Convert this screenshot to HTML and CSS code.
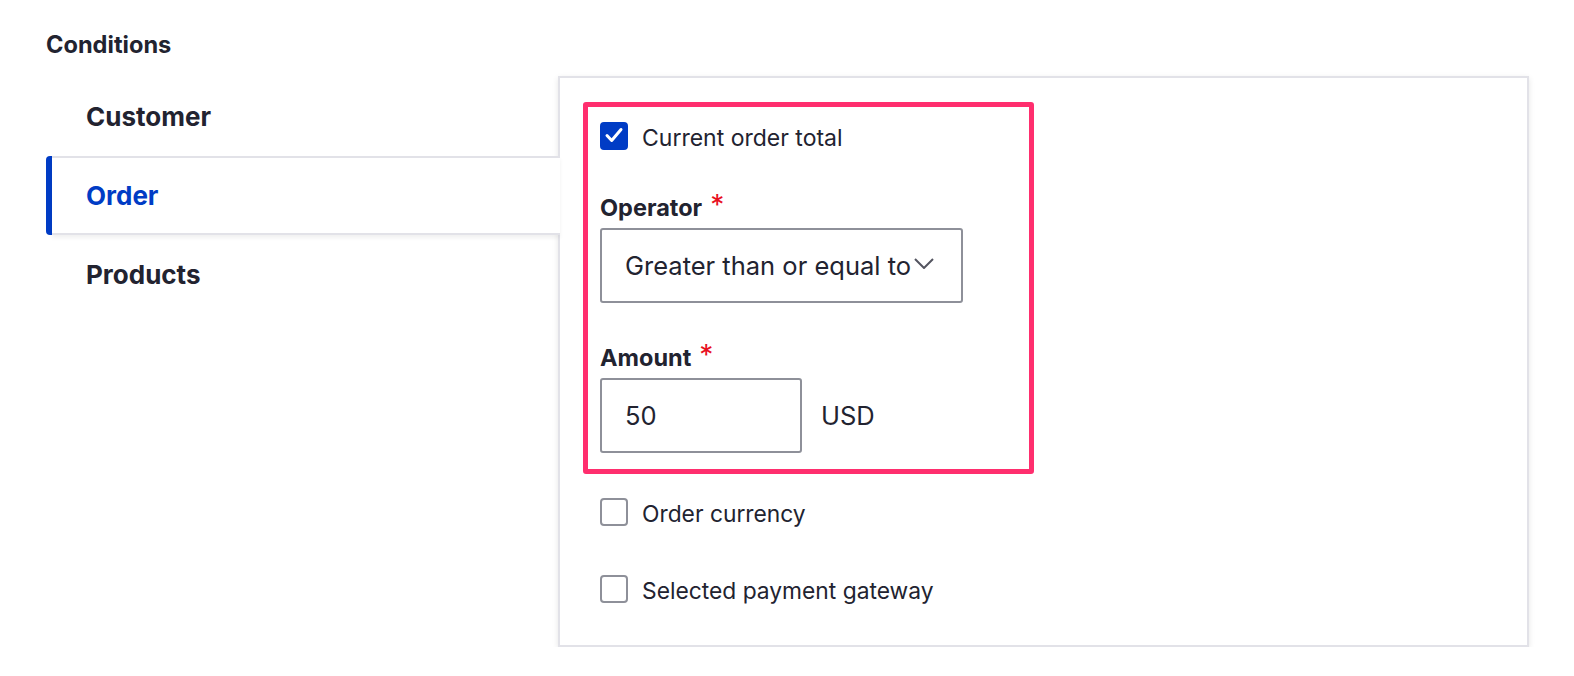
FILE: index.html
```html
<!DOCTYPE html>
<html lang="en">
<head>
<meta charset="utf-8">
<title>Conditions</title>
<link rel="stylesheet" href="styles.css">
</head>
<body>
<div class="page">
  <div class="title">Conditions</div>
  <div class="row">
    <ul class="tabs">
      <li class="tab">Customer</li>
      <li class="tab active"><span class="bar"></span><span class="tab-inner">Order</span></li>
      <li class="tab">Products</li>
    </ul>
    <div class="panel">
      <div class="highlight">
        <div class="check-row">
          <span class="checkbox checked"><svg width="24" height="24" viewBox="0 0 24 24"><polyline points="5,11.5 9.7,16.5 19,5.5" fill="none" stroke="#fff" stroke-width="3" stroke-linecap="round" stroke-linejoin="round"/></svg></span>
          <span class="check-label">Current order total</span>
        </div>
        <div class="field op">
          <div class="label"><span class="label-text">Operator</span><span class="req">*</span></div>
          <div class="select">
            <span class="select-text">Greater than or equal to</span>
            <svg class="chev" width="20" height="11" viewBox="0 0 20 11"><polyline points="1,1 10,10 19,1" fill="none" stroke="#545560" stroke-width="2"/></svg>
          </div>
        </div>
        <div class="field amount">
          <div class="label"><span class="label-text">Amount</span><span class="req">*</span></div>
          <div class="input-row">
            <div class="input">50</div>
            <span class="suffix">USD</span>
          </div>
        </div>
      </div>
      <div class="check-row other first">
        <span class="checkbox"></span>
        <span class="check-label">Order currency</span>
      </div>
      <div class="check-row other second">
        <span class="checkbox"></span>
        <span class="check-label">Selected payment gateway</span>
      </div>
    </div>
  </div>
</div>
</body>
</html>
```
FILE: styles.css
```css
html, body {
  margin: 0;
  background: #ffffff;
}

.page {
  padding: 31px 45px 0 46px;
  font-family: Inter, "Noto Sans", "Liberation Sans", sans-serif;
  color: #222330;
}

.title {
  font-size: 23.6px;
  font-weight: 700;
  line-height: 27px;
  height: 27px;
  margin-bottom: 18px;
}

.row {
  display: flex;
  align-items: flex-start;
}

.tabs {
  list-style: none;
  margin: 1px -2px 0 0;
  padding: 0;
  width: 514px;
  flex: none;
  position: relative;
  z-index: 1;
}

.tab {
  height: 79px;
  box-sizing: border-box;
  display: flex;
  align-items: center;
  padding-left: 40px;
  font-size: 26px;
  font-weight: 700;
}

.tab.active {
  padding-left: 0;
  align-items: stretch;
}

.bar {
  width: 6px;
  flex: none;
  background: #003cc5;
  border-radius: 4px 0 0 4px;
}

.tab-inner {
  flex: 1;
  display: flex;
  align-items: center;
  padding-left: 34px;
  border-top: 2px solid #e2e2e8;
  border-bottom: 2px solid #e2e2e8;
  background: #ffffff;
  color: #003cc5;
  box-shadow: 0 3px 4px rgba(0, 0, 0, 0.06);
}

.panel {
  flex: 1;
  border: 2px solid #e2e2e8;
  background: #ffffff;
  box-shadow: 0 2px 6px rgba(0, 0, 0, 0.1);
  padding: 24px 0 41px 23px;
}

.highlight {
  width: 451px;
  box-sizing: border-box;
  border: 5px solid #ff2e6e;
  border-radius: 3px;
  padding: 14px 0 16px 12px;
}

.check-row {
  display: flex;
  align-items: center;
  height: 30px;
}

.checkbox {
  width: 28px;
  height: 28px;
  box-sizing: border-box;
  border: 2px solid #8e9099;
  border-radius: 4px;
  flex: none;
  margin-right: 14px;
  display: flex;
}

.checkbox.checked {
  background: #003cc5;
  border-color: #003cc5;
}

.check-label {
  font-size: 23px;
  line-height: 30px;
  padding-top: 3px;
  white-space: nowrap;
}

.label {
  display: flex;
  align-items: flex-start;
  height: 28px;
  white-space: nowrap;
}

.label-text {
  font-size: 23.5px;
  font-weight: 700;
  line-height: 28px;
}

.req {
  color: #e8101e;
  font-size: 28px;
  font-weight: 400;
  line-height: 20px;
  margin: 1px 0 0 8px;
}

.field.op {
  margin-top: 43px;
}

.field.amount {
  margin-top: 41px;
}

.select {
  margin-top: 6px;
  width: 363px;
  height: 75px;
  box-sizing: border-box;
  border: 2px solid #8e9099;
  border-radius: 3px;
  display: flex;
  align-items: center;
  justify-content: space-between;
  padding: 0 27px 0 23px;
  font-size: 25.5px;
  white-space: nowrap;
}

.chev {
  flex: none;
  margin-top: -4px;
}

.input-row {
  margin-top: 6px;
  display: flex;
  align-items: center;
}

.input {
  width: 202px;
  height: 75px;
  box-sizing: border-box;
  border: 2px solid #8e9099;
  border-radius: 3px;
  padding-left: 23px;
  display: flex;
  align-items: center;
  font-size: 25.5px;
}

.suffix {
  margin-left: 19px;
  font-size: 25.5px;
}

.other {
  margin-left: 17px;
}

.other.first {
  margin-top: 23px;
}

.other.second {
  margin-top: 47px;
}

.other .check-label {
  font-size: 22.8px;
}
```
